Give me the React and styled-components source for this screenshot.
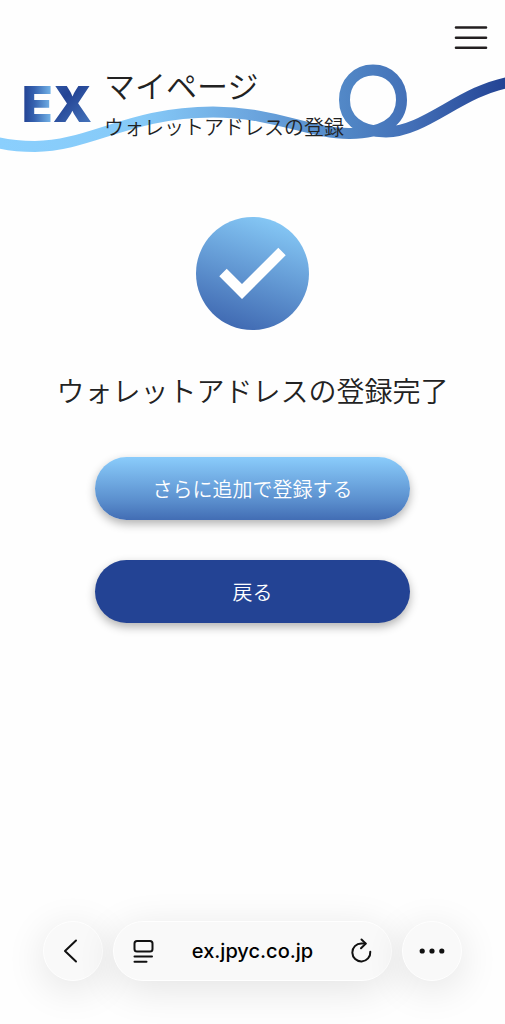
import React from 'react';
import styled, { createGlobalStyle, css } from 'styled-components';

const GlobalStyle = createGlobalStyle`
  * {
    box-sizing: border-box;
  }

  body {
    margin: 0;
    background: #fefefe;
    color: #222;
    font-family: 'Noto Sans CJK JP', 'Noto Sans', sans-serif;
    font-weight: 350;
  }

  button {
    font: inherit;
    color: inherit;
    border: none;
    padding: 0;
    cursor: pointer;
  }
`;

const Page = styled.div`
  min-height: 100vh;
  display: flex;
  flex-direction: column;
`;

const Header = styled.header`
  position: relative;
  padding: 20px 16px 0 24px;
`;

const Wave = styled.svg`
  position: absolute;
  top: 60px;
  left: 0;
  width: 100%;
  height: auto;
`;

const MenuRow = styled.div`
  display: flex;
  justify-content: flex-end;
`;

const MenuButton = styled.button`
  display: flex;
  background: none;
`;

const Brand = styled.div`
  position: relative;
  display: flex;
  align-items: center;
  gap: 16px;
  padding-top: 6px;
`;

const Logo = styled.svg`
  flex: none;
  overflow: visible;
  font-family: Inter, sans-serif;
  font-weight: 900;
`;

const Title = styled.h1`
  margin: 0;
  font-size: 31px;
  line-height: 46px;
  font-weight: inherit;
`;

const Subtitle = styled.p`
  margin: 0;
  font-size: 20px;
  line-height: 38px;
`;

const Main = styled.main`
  display: flex;
  flex-direction: column;
  align-items: center;
  padding: 71px 24px 40px;
`;

const Message = styled.h2`
  margin: 40px 0 47px;
  font-size: 28px;
  line-height: 40px;
  font-weight: inherit;
  text-align: center;
`;

const Actions = styled.div`
  width: 100%;
  max-width: 315px;
  display: flex;
  flex-direction: column;
  gap: 40px;
`;

const ActionButton = styled.button`
  height: 63px;
  border-radius: 32px;
  font-size: 20px;
  color: #fff;
  background: #234394;
  box-shadow: 0 4px 10px rgba(0, 0, 0, 0.3);

  ${({ $primary }) =>
    $primary &&
    css`
      background: linear-gradient(#8accfb, #5a8ecd 70%, #426db4);
    `}
`;

const BrowserBar = styled.nav`
  margin-top: auto;
  display: flex;
  gap: 10px;
  padding: 0 43px 43px;
`;

const glass = css`
  height: 60px;
  border-radius: 30px;
  border: 1px solid #fff;
  background: #f9f9f9;
  box-shadow: 0 8px 40px rgba(0, 0, 0, 0.11);
  color: #111;
`;

const RoundButton = styled.button`
  && {
    ${glass}
  }
  width: 60px;
  flex: none;
  display: flex;
  align-items: center;
  justify-content: center;
`;

const AddressPill = styled.div`
  ${glass}
  flex: 1;
  display: flex;
  align-items: center;
  justify-content: space-between;
  padding: 0 16px;
`;

const IconButton = styled.button`
  display: flex;
  background: none;
`;

const Address = styled.button`
  background: none;
  font-family: Inter, sans-serif;
  font-size: 20px;
  font-weight: 500;
  color: #000;
`;

const ExLogo = () => (
  <Logo width="64" height="68" viewBox="0 0 64 68" role="img" aria-label="EX">
    <defs>
      <linearGradient id="logoE" gradientUnits="userSpaceOnUse" x1="0" y1="0" x2="30" y2="0">
        <stop offset="0" stopColor="#234394" />
        <stop offset="0.35" stopColor="#3663b0" />
        <stop offset="1" stopColor="#7fc3f3" />
      </linearGradient>
      <linearGradient id="logoX" gradientUnits="userSpaceOnUse" x1="28" y1="14" x2="64" y2="52">
        <stop offset="0" stopColor="#3158a6" />
        <stop offset="0.35" stopColor="#234394" />
        <stop offset="1" stopColor="#4270b8" />
      </linearGradient>
    </defs>
    <text x="-2" y="52" fontSize="50">
      <tspan fill="url(#logoE)">E</tspan>
      <tspan fill="url(#logoX)">X</tspan>
    </text>
  </Logo>
);

const HeaderWave = () => (
  <Wave viewBox="0 0 505 100" fill="none" aria-hidden="true">
    <defs>
      <linearGradient id="wave" gradientUnits="userSpaceOnUse" x1="0" y1="0" x2="505" y2="0">
        <stop offset="0" stopColor="#8acffd" />
        <stop offset="0.28" stopColor="#86caf8" />
        <stop offset="0.5" stopColor="#6ba5de" />
        <stop offset="0.7" stopColor="#4f84c4" />
        <stop offset="0.82" stopColor="#426eb6" />
        <stop offset="1" stopColor="#234394" />
      </linearGradient>
    </defs>
    <path
      d="M-5 82C10 86 22 86.5 35 86.5C90 86 130 52 213 52C275 52 310 74 350 73.5C382 73 401.5 62 401.5 40C401.5 22 389 10 373 10C357 10 344.5 22 344.5 40C344.5 58 358 72 386 72C425 72 460 31 510 22"
      stroke="url(#wave)"
      strokeWidth="11"
    />
  </Wave>
);

const CheckBadge = () => (
  <svg width="113" height="113" viewBox="0 0 113 113" aria-hidden="true">
    <defs>
      <linearGradient id="badge" x1="0.66" y1="0.03" x2="0.34" y2="0.97">
        <stop offset="0" stopColor="#84c6f4" />
        <stop offset="1" stopColor="#416bb3" />
      </linearGradient>
    </defs>
    <circle cx="56.5" cy="56.5" r="56.5" fill="url(#badge)" />
    <path d="M27 55.5L46 74.5L86 34.5" fill="none" stroke="#fff" strokeWidth="10.5" />
  </svg>
);

const App = () => {
  return (
    <>
      <GlobalStyle />
      <Page>
        <Header>
          <HeaderWave />
          <MenuRow>
            <MenuButton type="button" aria-label="メニュー">
              <svg width="36" height="36" viewBox="0 0 36 36" stroke="#231f20" strokeWidth="2.6" strokeLinecap="round">
                <path d="M3 7.5H33M3 17.7H33M3 27.8H33" />
              </svg>
            </MenuButton>
          </MenuRow>
          <Brand>
            <ExLogo />
            <div>
              <Title>マイページ</Title>
              <Subtitle>ウォレットアドレスの登録</Subtitle>
            </div>
          </Brand>
        </Header>

        <Main>
          <CheckBadge />
          <Message>ウォレットアドレスの登録完了</Message>
          <Actions>
            <ActionButton type="button" $primary>さらに追加で登録する</ActionButton>
            <ActionButton type="button">戻る</ActionButton>
          </Actions>
        </Main>

        <BrowserBar>
          <RoundButton type="button" aria-label="戻る">
            <svg width="24" height="24" viewBox="0 0 24 24" fill="none" stroke="currentColor" strokeWidth="2" strokeLinecap="round" strokeLinejoin="round">
              <path d="M15 1.5L4 12L15 22.5" />
            </svg>
          </RoundButton>
          <AddressPill>
            <IconButton type="button" aria-label="ページメニュー">
              <svg width="26" height="26" viewBox="0 0 26 26" fill="none" stroke="currentColor" strokeWidth="2" strokeLinecap="round">
                <rect x="4.5" y="3" width="18" height="10.5" rx="2.5" />
                <path d="M4.5 18.6H22M4.5 23.8H16.5" />
              </svg>
            </IconButton>
            <Address type="button">ex.jpyc.co.jp</Address>
            <IconButton type="button" aria-label="再読み込み">
              <svg width="26" height="26" viewBox="0 0 26 26" fill="none" stroke="currentColor" strokeWidth="2" strokeLinecap="round" strokeLinejoin="round">
                <path d="M21.3 13.8A9 9 0 1 1 12.3 5.4H16.5" />
                <path d="M12.5 1.5L16.8 5.6L12 10.2" />
              </svg>
            </IconButton>
          </AddressPill>
          <RoundButton type="button" aria-label="その他">
            <svg width="26" height="26" viewBox="0 0 26 26" fill="currentColor">
              <circle cx="3.2" cy="13" r="2.6" />
              <circle cx="13" cy="13" r="2.6" />
              <circle cx="22.8" cy="13" r="2.6" />
            </svg>
          </RoundButton>
        </BrowserBar>
      </Page>
    </>
  );
};

export default App;
